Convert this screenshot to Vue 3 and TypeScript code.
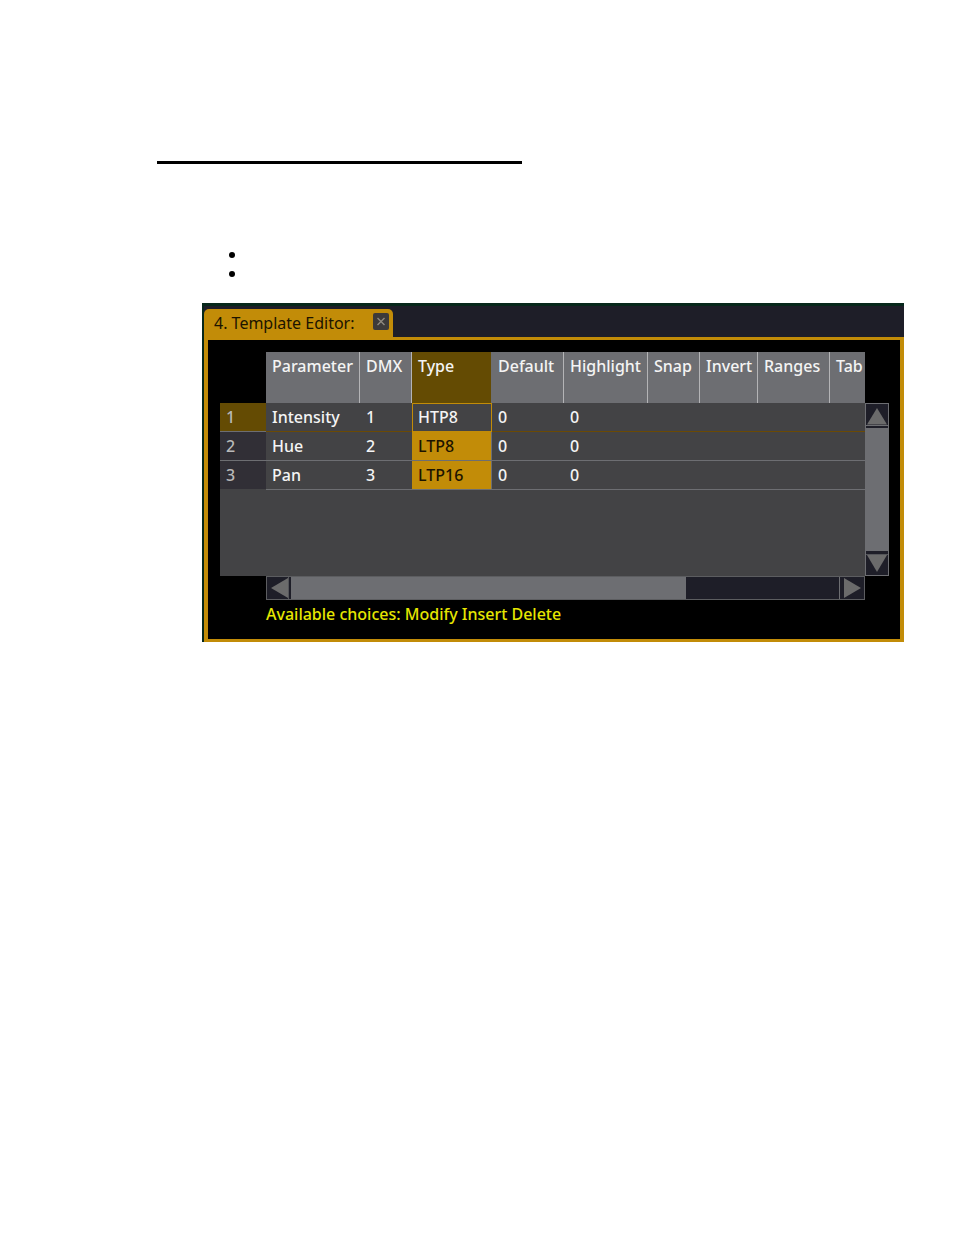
<script setup lang="ts">
interface Row {
  id: number
  parameter: string
  dmx: number
  type: string
  def: number
  highlight: number
}

const columns: { label: string; cls: string }[] = [
  { label: 'Parameter', cls: 'c-parameter' },
  { label: 'DMX', cls: 'c-dmx' },
  { label: 'Type', cls: 'c-type' },
  { label: 'Default', cls: 'c-default' },
  { label: 'Highlight', cls: 'c-highlight' },
  { label: 'Snap', cls: 'c-snap' },
  { label: 'Invert', cls: 'c-invert' },
  { label: 'Ranges', cls: 'c-ranges' },
  { label: 'Tab', cls: 'c-tab' },
]

const rows: Row[] = [
  { id: 1, parameter: 'Intensity', dmx: 1, type: 'HTP8', def: 0, highlight: 0 },
  { id: 2, parameter: 'Hue', dmx: 2, type: 'LTP8', def: 0, highlight: 0 },
  { id: 3, parameter: 'Pan', dmx: 3, type: 'LTP16', def: 0, highlight: 0 },
]
</script>

<template>
  <main class="page">
    <hr class="rule" />
    <ul class="bullets">
      <li></li>
      <li></li>
    </ul>

    <section class="window">
      <header class="tabs">
        <div class="tab">
          <span>4. Template Editor:</span>
          <button class="close" type="button" aria-label="Close">
            <svg viewBox="0 0 16 17" width="16" height="17">
              <path d="M4.5 5 11.5 12M11.5 5 4.5 12" fill="none" stroke="#8f8a80" stroke-width="1.4" />
            </svg>
          </button>
        </div>
      </header>

      <div class="body">
        <div class="grid">
          <div class="sheet">
            <table>
              <colgroup>
                <col class="c-row" />
                <col v-for="c in columns" :key="c.label" :class="c.cls" />
              </colgroup>
              <thead>
                <tr>
                  <td class="corner"></td>
                  <th v-for="c in columns" :key="c.label" scope="col" :class="{ picked: c.label === 'Type' }">
                    {{ c.label }}
                  </th>
                </tr>
              </thead>
              <tbody>
                <tr v-for="r in rows" :key="r.id" :class="{ current: r.id === 1 }">
                  <th scope="row">{{ r.id }}</th>
                  <td>{{ r.parameter }}</td>
                  <td>{{ r.dmx }}</td>
                  <td class="type">{{ r.type }}</td>
                  <td>{{ r.def }}</td>
                  <td>{{ r.highlight }}</td>
                  <td></td>
                  <td></td>
                  <td></td>
                  <td></td>
                </tr>
              </tbody>
            </table>
          </div>

          <div class="vbar">
            <button type="button" aria-label="Scroll up">
              <svg viewBox="0 0 22 24" width="22" height="24">
                <path d="M11 4 21 20.500H1Z" fill="#6b6b6b" />
                <path d="M0 21.5h22" stroke="#6d6e72" />
              </svg>
            </button>
            <div class="vthumb"></div>
            <button type="button" aria-label="Scroll down">
              <svg viewBox="0 0 22 24" width="22" height="24">
                <path d="M0 3.500h22" stroke="#55565a" />
                <path d="M1 4H21L11 21Z" fill="#6b6b6b" />
              </svg>
            </button>
          </div>

          <div class="hbar">
            <button type="button" aria-label="Scroll left">
              <svg viewBox="0 0 24 22" width="24" height="22">
                <path d="M21 1V21L4 11Z" fill="#6b6b6b" />
                <path d="M21.500 0v22" stroke="#55565a" />
              </svg>
            </button>
            <div class="htrack"><div class="hthumb"></div></div>
            <button class="right" type="button" aria-label="Scroll right">
              <svg viewBox="0 0 24 22" width="24" height="22">
                <path d="M4 1V21L21 11Z" fill="#6b6b6b" />
              </svg>
            </button>
          </div>
        </div>
        <p class="choices">Available choices: Modify Insert Delete</p>
      </div>
    </section>
  </main>
</template>

<style>
body {
  background: #fff;
}
</style>

<style scoped>
.page {
  padding: 161px 50px 40px 157px;
  font-family: 'Noto Sans', 'Open Sans', sans-serif;
  font-size: 16px;
  font-weight: 500;
  line-height: 20px;
}

.rule {
  width: 365px;
  height: 3px;
  margin: 0;
  border: 0;
  background: #000;
}

.bullets {
  margin: 81px 0 20px;
  padding: 0 0 0 72px;
  list-style: none;
}

.bullets li {
  display: flex;
  align-items: center;
  height: 19px;
}

.bullets li::before {
  content: '';
  width: 6px;
  height: 6px;
  border-radius: 50%;
  background: #000;
}

.window {
  margin-left: 45px;
  border-top: 3px solid #07281b;
  border-left: 2px solid #07281b;
  background: #1e1e28;
}

.tabs {
  display: flex;
  height: 31px;
  align-items: flex-end;
}

.tab {
  display: flex;
  align-items: center;
  justify-content: space-between;
  box-sizing: border-box;
  width: 189px;
  height: 28px;
  padding: 0 4px 0 10px;
  border-radius: 5px 5px 0 0;
  background: #c28c08;
  color: #1c1400;
  font-weight: 400;
}

.close {
  display: flex;
  width: 16px;
  height: 17px;
  margin-bottom: 3px;
  padding: 0;
  border: 0;
  border-radius: 2px;
  background: #3c3a3a;
}

.body {
  padding: 12px 11px 15px 12px;
  border: solid #c28c08;
  border-width: 3px 4px;
  background: #000;
}

.grid {
  display: grid;
  grid-template-columns: 46px minmax(0, 1fr) 24px;
  grid-template-rows: 51px 173px 24px;
}

.sheet {
  grid-area: 1 / 1 / 3 / 3;
  overflow: hidden;
  background: #434345;
}

table {
  width: 100%;
  table-layout: fixed;
  border-collapse: separate;
  border-spacing: 0;
}

.c-row { width: 46px; }
.c-parameter { width: 94px; }
.c-dmx { width: 52px; }
.c-type { width: 80px; }
.c-default { width: 72px; }
.c-highlight { width: 84px; }
.c-snap { width: 52px; }
.c-invert { width: 58px; }
.c-ranges { width: 72px; }

th,
td {
  box-sizing: border-box;
  padding: 0 0 0 6px;
  text-align: left;
  font-weight: 500;
  white-space: nowrap;
  color: #f4f4f4;
}

thead th {
  height: 51px;
  padding-top: 4px;
  vertical-align: top;
  border-right: 1px solid #b4b4b6;
  background: #6d6e72;
}

thead th:last-child {
  border-right: 0;
}

thead .picked {
  border-right-color: #6d6e72;
  background: #644b03;
}

thead .corner {
  background: #000;
}

tbody th,
tbody td {
  height: 29px;
  padding-bottom: 1px;
  border-bottom: 1px solid #6d6e72;
}

tbody th {
  background: #312f36;
  color: #b9b9b9;
}

tbody tr:last-child th {
  border-bottom-color: #434345;
}

tbody .current th {
  background: #644b03;
}

tbody .current td {
  border-bottom-color: #6b4a04;
}

tbody .type {
  border-right: 1px solid #6d6e72;
  background: #c28c08;
  color: #1c1400;
}

tbody .current .type {
  padding-left: 5px;
  border: 1px solid #c28c08;
  background: #434345;
  color: #f4f4f4;
}

.vbar {
  grid-area: 2 / 3;
  display: flex;
  flex-direction: column;
  border: 1px solid #6d6e72;
}

.vbar button,
.hbar button {
  display: flex;
  flex: none;
  padding: 0;
  border: 0;
  background: #1e1e28;
}

.vthumb {
  flex: 1;
  background: #6d6e72;
}

.hbar {
  grid-area: 3 / 2;
  display: flex;
  border: 1px solid #5c5d60;
}

.htrack {
  flex: 1;
  background: #1e1e28;
}

.hthumb {
  width: 72%;
  height: 100%;
  background: #6d6e72;
}

.hbar .right {
  border-left: 1px solid #6d6e72;
}

.choices {
  margin: 4px 0 0 46px;
  color: #e6e600;
}
</style>
